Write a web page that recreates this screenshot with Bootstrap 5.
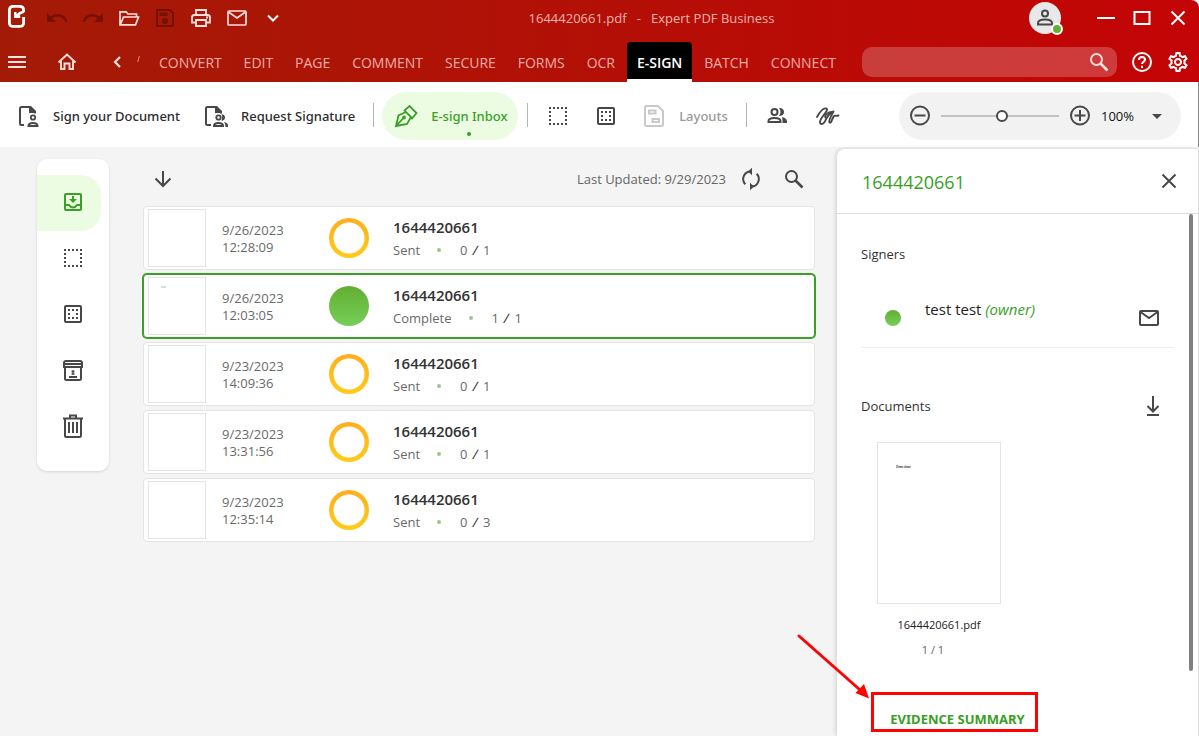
<!DOCTYPE html>
<html lang="en">
<head>
<meta charset="utf-8">
<meta name="viewport" content="width=device-width, initial-scale=1">
<title>1644420661.pdf - Expert PDF Business</title>
<link href="https://cdn.jsdelivr.net/npm/bootstrap@5.3.0/dist/css/bootstrap.min.css" rel="stylesheet">
<style>
  :root { --green: #3a9e27; --mint: #ebfce3; --ink: #484848; --edge: #e4e4e4; }
  body { font-family: "Open Sans", "Noto Sans", sans-serif; font-size: 13px; line-height: 18px; color: #333; background: #f4f4f4; }
  svg { display: block; flex: none; fill: none; }
  :where(svg:not([stroke])) { stroke: currentColor; }
  :where(svg:not([stroke-width])) { stroke-width: 2; }
  .solid { fill: currentColor; stroke: none; }
  button { color: inherit; }
  .tool { width: 36px; height: 36px; padding: 0; border: 0; background: none; display: flex; align-items: center; justify-content: center; flex: none; }
  .tool.slim { width: 34px; }

  .app-head { background: linear-gradient(90deg, #a31b06, #c40406); color: #ffdede; border-top-right-radius: 8px; padding-right: 3px; }
  .app-title { color: #eeb2ae; white-space: pre; padding-right: 17px; }
  .tool:disabled { color: #751003; }
  .avatar { width: 32px; height: 32px; margin-right: 27px; background: #e8e8e8; color: var(--ink); }
  .online { width: 12px; height: 12px; right: -2px; bottom: -1px; background: #62b132; border: 2px solid #fff; }
  .menu-row { height: 40px; margin-top: 6px; }
  .home { margin: 0 14px; }
  .tabs { margin: 0 16px 0 10px; }
  .tabs .nav-link { font-size: 14px; line-height: 18px; color: #f0aca8; padding: 12px 10px 10px; border-radius: 4px 4px 0 0; }
  .tabs .nav-link.active { background: #000; color: #fff; font-weight: 600; padding-bottom: 7px; border-bottom: 3px solid #fff; border-radius: 4px 4px 0 0; }
  .cut-tab { width: 3px; height: 6px; border-right: 1px solid #e48a84; transform: skewX(-15deg); margin-bottom: 6px; }
  .finder { width: 255px; height: 30px; background: rgba(255,255,255,.21); border-radius: 10px; padding-right: 6px; margin-right: 7px; }
  .finder input { background: none; border: 0; outline: 0; color: #fff; min-width: 0; }

  .ribbon { background: #fff; height: 65px; padding: 10px 17px 7px 16px; border-right: 1px solid #888; color: var(--ink); }
  .ribbon .cmd { height: 48px; padding: 0; border: 0; background: none; font-family: "Noto Sans", "Open Sans", sans-serif; font-weight: 500; white-space: nowrap; display: flex; align-items: center; gap: 13px; flex: none; }
  .ribbon .cmd span { color: #2d2d2d; }
  .ribbon .inbox { width: 136px; border-radius: 24px; background: var(--mint); color: var(--green); padding-left: 12px; position: relative; }
  .ribbon .inbox span { color: var(--green); }
  .ribbon .inbox::after { content: ""; position: absolute; left: 85px; bottom: 4px; width: 4px; height: 4px; border-radius: 50%; background: var(--green); }
  .ribbon .cmd:disabled { color: #c9c9c9; }
  .ribbon .cmd:disabled span { color: #999; }
  .cmd-group { display: flex; align-items: center; gap: 24px; }
  .rule { width: 1px; height: 24px; background: #b5b5b5; flex: none; margin: 0 18px 3px; }
  .rule.tight-end { margin-right: 8px; }
  .rule.tight-start { margin-left: 9px; }
  .zoomer { width: 282px; height: 48px; border-radius: 24px; background: #f2f2f2; }
  .zoomer input { appearance: none; width: 118px; height: 14px; background: linear-gradient(#c2c2c2, #c2c2c2) center / 100% 2px no-repeat; margin: 0; }
  .zoomer input::-webkit-slider-thumb { appearance: none; width: 12px; height: 12px; border-radius: 50%; border: 2px solid var(--ink); background: #fff; }
  .zoomer select { appearance: none; border: 0; background: none; color: #111; width: 40px; padding: 0; }

  .side { width: 72px; padding: 16px 0; border-radius: 10px; background: #fff; color: var(--ink); box-shadow: 0 1px 3px rgba(0,0,0,.12); margin: 12px 34px 0 37px; flex: none; }
  .side button { width: 72px; height: 56px; border: 0; background: none; padding: 0 0 2px; display: flex; align-items: center; justify-content: center; }
  .side .current { width: 64px; border-radius: 0 20px 20px 0; background: var(--mint); color: var(--green); padding-left: 8px; }

  .inbox-list { min-width: 0; padding-right: 22px; }
  .list-head { height: 59px; padding: 5px 3px 0 0; color: #666; }
  .list-head svg { stroke: var(--ink); }
  .entry { height: 64px; border: 1px solid var(--edge); border-radius: 4px; background: #fff; padding: 0 4px; color: #6a6a6a; }
  .entry.chosen { border-color: var(--green); box-shadow: 0 0 0 1px var(--green); }
  .page-thumb { width: 58px; height: 58px; border: 1px solid var(--edge); flex: none; position: relative; }
  .scribble { position: absolute; left: 12px; top: 8px; width: 5px; height: 2px; background: #ddd; }
  .when { width: 107px; line-height: 17px; margin-left: 16px; padding-top: 1px; }
  .ring { width: 40px; height: 40px; border-radius: 50%; background: radial-gradient(closest-side, #fff 15px, transparent 16px), linear-gradient(#ffae1c, #ffcb18); flex: none; }
  .ring.full { background: linear-gradient(#62ae33, #76cf57); }
  .entry-name { font-size: 15px; line-height: 22px; font-weight: 600; color: #333; }
  .entry-state { padding: 3px 0 1px; }
  .dot { width: 4px; height: 4px; border-radius: 50%; background: #93cd88; margin: 0 19px 0 17px; }
  .entry b { display: inline-block; font-weight: 400; color: #111; margin: 0 2px; transform: skewX(-12deg); }

  .detail { width: 362px; background: #fff; border-top-left-radius: 8px; border-right: 1px solid #ddd; box-shadow: -1px 0 5px rgba(0,0,0,.16); margin-top: 2px; flex: none; position: relative; color: var(--ink); }
  .detail-head { height: 65px; border-bottom: 1px solid #ddd; padding: 0 17px 0 25px; }
  .detail-head h1 { font-size: 18px; line-height: 24px; font-weight: 400; color: var(--green); margin: 0; padding-top: 1px; }
  .detail h2 { font-size: 13px; line-height: 18px; font-weight: 400; color: #333; margin: 0; }
  .detail-body { padding: 31px 24px 0; }
  .signer { height: 61px; margin-top: 24px; padding: 2px 7px 0 0; border-bottom: 1px solid #efefef; }
  .signer-dot { width: 16px; height: 16px; border-radius: 50%; background: linear-gradient(#62ae33, #76cf57); margin: 0 24px 0 24px; }
  .signer p { font-size: 15px; line-height: 20px; color: #222; margin: 0 0 18px; }
  .signer em { color: var(--green); }
  .docs-head { padding: 40px 3px 0 0; }
  .doc-card { width: 124px; margin: 18px 0 0 16px; text-align: center; font-size: 11px; line-height: 15px; }
  .doc-thumb { height: 162px; border: 1px solid var(--edge); padding: 22px 0 0 18px; text-align: left; font: italic 700 3px/4px "Liberation Serif", serif; color: #333; }
  .doc-name { padding-top: 13px; color: #222; }
  .doc-count { padding: 10px 12px 0 0; color: #666; }
  .scroll-thumb { position: absolute; right: 5px; top: 65px; width: 4px; height: 457px; border-radius: 2px; background: #808080; }
  .evidence { width: 167px; height: 40px; border: 3px solid #ff0303; margin: 35px 0 4px 10px; position: relative; }
  .evidence button { border: 0; background: none; padding: 15px 0 0 6px; width: 100%; font-family: "Noto Sans", "Open Sans", sans-serif; font-weight: 700; color: var(--green); white-space: nowrap; }
  .pointer { position: absolute; left: -78px; top: -62px; color: #ff0303; }
</style>
</head>
<body>
<svg width="0" height="0" class="position-absolute">
  <symbol id="mail" viewBox="0 0 24 24"><rect x="3" y="5" width="18" height="14" rx="1"/><path d="M3.500 6 12 12 20.500 6"/></symbol>
  <symbol id="lens" viewBox="0 0 24 24"><circle cx="9.500" cy="9.500" r="5.500"/><path d="M13.500 13.500 20.500 20.500" stroke-width="2.600"/></symbol>
  <symbol id="dots" viewBox="0 0 24 24"><path d="M3 4h18M3 20h18M4 3v18M20 3v18" stroke-dasharray="2 2"/></symbol>
  <symbol id="boxdots" viewBox="0 0 24 24"><rect x="4" y="4" width="16" height="16" rx="1"/><path d="M7 8h10M7 12h2M11 16h2M7 16h2M15 16h2M15 12h2" stroke-dasharray="2 2"/></symbol>
</svg>
<div class="min-vh-100 d-flex flex-column">
  <header class="app-head">
    <div class="d-flex align-items-center">
      <svg width="39" height="36" viewBox="0 0 39 36" stroke="#fff" stroke-width="2.800" aria-label="Expert PDF"><path d="M23.600 12V10q0-3.600-4-3.600H13.300q-3.900 0-3.900 4v12q0 4 3.900 4h6.400q3.900 0 3.900-4V17"/><path d="M15.300 12v4.800h5M15.500 16.500q4.500-4 8.500-5" stroke-width="2.400"/></svg>
      <button class="tool" disabled aria-label="Undo"><svg class="solid" width="24" height="24" viewBox="0 0 24 24"><path d="M12.500 8c-2.650 0-5.050 1-6.900 2.600L2 7v9h9l-3.600-3.600C8.800 11.200 10.550 10.500 12.500 10.500c3.550 0 6.550 2.300 7.600 5.500l2.400-.8C21.100 11 17.150 8 12.500 8z"/></svg></button>
      <button class="tool" disabled aria-label="Redo"><svg class="solid" width="24" height="24" viewBox="0 0 24 24"><path d="M11.500 8c2.650 0 5.050 1 6.900 2.600L22 7v9h-9l3.600-3.600c-1.400-1.200-3.150-1.900-5.100-1.900-3.550 0-6.550 2.300-7.600 5.500l-2.400-.8C2.900 11 6.850 8 11.500 8z"/></svg></button>
      <button class="tool" aria-label="Open"><svg width="24" height="24" viewBox="0 0 24 24" stroke-width="1.700"><path d="M3 18.800V5.800h6l2 2.200h8.500v2.500M3.200 18.800 6.500 11H21.500l-3 7.800z"/></svg></button>
      <button class="tool" disabled aria-label="Save"><svg width="24" height="24" viewBox="0 0 24 24"><path d="M4 4h13l3 3v13H4z"/><path class="solid" d="M6.500 6.500h8v3.500h-8z"/><circle class="solid" cx="12" cy="15" r="3"/></svg></button>
      <button class="tool" aria-label="Print"><svg width="24" height="24" viewBox="0 0 24 24" stroke-width="1.800"><path d="M7 8.500V4h10v4.500M7 16.500H3v-5q0-2.500 2.500-2.500h13q2.500 0 2.500 2.500v5h-4M7 14h10v6H7z"/><path d="M17 11.500h2"/></svg></button>
      <button class="tool" aria-label="Mail"><svg width="26" height="24" viewBox="0 0 24 24" stroke-width="1.700"><use href="#mail"/></svg></button>
      <button class="tool" aria-label="More"><svg width="24" height="24" viewBox="0 0 24 24" stroke="#fff"><path d="M7 9.500l5 5 5-5"/></svg></button>
      <div class="app-title flex-fill text-center">1644420661.pdf   -   Expert PDF Business</div>
      <div class="avatar rounded-circle position-relative flex-shrink-0"><svg class="mx-auto pt-1" width="24" height="28" viewBox="0 0 24 24"><circle cx="12" cy="7.500" r="3"/><path d="M5 18.500v-1.500q0-3.500 7-3.500t7 3.500v1.500z"/></svg><span class="online rounded-circle position-absolute"></span></div>
      <div class="d-flex text-white">
        <button class="tool" aria-label="Minimize"><svg width="24" height="24" viewBox="0 0 24 24"><path d="M3 12h18"/></svg></button>
        <button class="tool" aria-label="Maximize"><svg width="24" height="24" viewBox="0 0 24 24"><rect x="4.500" y="6" width="15" height="12"/></svg></button>
        <button class="tool" aria-label="Close"><svg width="24" height="24" viewBox="0 0 24 24"><path d="M5.500 5.500l13 13M18.500 5.500l-13 13"/></svg></button>
      </div>
    </div>
    <div class="menu-row d-flex align-items-center">
      <button class="tool" aria-label="Menu"><svg width="24" height="24" viewBox="0 0 24 24"><path d="M2 7h18M2 12h18M2 17h18"/></svg></button>
      <button class="tool home" aria-label="Home"><svg width="24" height="24" viewBox="0 0 24 24" stroke-width="1.900"><path d="M2.500 12.500 11 4.500l8.500 8M5 11v8h3.500v-5.500h5V19H17v-8"/></svg></button>
      <button class="tool" aria-label="Scroll tabs left"><svg width="24" height="24" viewBox="0 0 24 24" stroke-width="2.200"><path d="M14 7l-5 5 5 5"/></svg></button>
      <span class="cut-tab"></span>
      <nav class="tabs nav flex-nowrap flex-fill justify-content-between" aria-label="Ribbon tabs">
        <a class="nav-link" href="#">CONVERT</a><a class="nav-link" href="#">EDIT</a><a class="nav-link" href="#">PAGE</a><a class="nav-link" href="#">COMMENT</a><a class="nav-link" href="#">SECURE</a><a class="nav-link" href="#">FORMS</a><a class="nav-link" href="#">OCR</a><a class="nav-link active" href="#" aria-current="page">E-SIGN</a><a class="nav-link" href="#">BATCH</a><a class="nav-link" href="#">CONNECT</a>
      </nav>
      <label class="finder d-flex align-items-center"><input type="text" class="flex-fill ps-3" aria-label="Search commands"><svg width="24" height="24"><use href="#lens"/></svg></label>
      <button class="tool text-white" aria-label="Help"><svg width="24" height="24" viewBox="0 0 24 24"><circle cx="12" cy="12" r="9"/><path d="M9 10q0-3 3-3t3 2.700c0 2.100-3 2.200-3 4.300M12 15.800v2.200"/></svg></button>
      <button class="tool text-white" aria-label="Settings"><svg class="solid" width="24" height="24" viewBox="0 0 24 24"><path d="M19.430 12.980c.04-.32.07-.64.07-.98s-.03-.66-.07-.98l2.110-1.650c.19-.15.24-.42.12-.64l-2-3.460c-.12-.22-.39-.3-.61-.22l-2.490 1c-.52-.4-1.080-.73-1.690-.98l-.38-2.650C14.460 2.180 14.250 2 14 2h-4c-.25 0-.46.18-.49.42l-.38 2.650c-.61.25-1.170.59-1.690.98l-2.490-1c-.23-.09-.49 0-.61.22l-2 3.460c-.13.22-.07.49.12.64l2.110 1.650c-.04.32-.07.65-.07.98s.03.66.07.98l-2.110 1.650c-.19.15-.24.42-.12.64l2 3.460c.12.22.39.3.61.22l2.490-1c.52.4 1.080.73 1.690.98l.38 2.650c.03.24.24.42.49.42h4c.25 0 .46-.18.49-.42l.38-2.650c.61-.25 1.170-.59 1.690-.98l2.490 1c.23.09.49 0 .61-.22l2-3.460c.12-.22.07-.49-.12-.64l-2.110-1.650zm-1.980-1.710c.04.31.05.52.05.73s-.02.43-.05.73l-.14 1.130.89.700 1.080.84-.7 1.210-1.270-.51-1.040-.42-.9.680c-.43.32-.84.56-1.250.73l-1.060.43-.16 1.130-.2 1.350h-1.400l-.19-1.350-.16-1.130-1.060-.43c-.43-.18-.83-.41-1.230-.71l-.91-.7-1.060.43-1.270.51-.7-1.210 1.080-.84.89-.7-.14-1.130c-.03-.31-.05-.54-.05-.74s.02-.43.05-.73l.14-1.130-.89-.7-1.080-.84.7-1.210 1.270.51 1.040.42.9-.68c.43-.32.84-.56 1.250-.73l1.060-.43.16-1.130.2-1.350h1.390l.19 1.350.16 1.130 1.060.43c.43.18.83.41 1.230.71l.91.7 1.060-.43 1.270-.51.7 1.210-1.070.85-.89.7.14 1.130zM12 8c-2.210 0-4 1.790-4 4s1.790 4 4 4 4-1.790 4-4-1.790-4-4-4zm0 6c-1.100 0-2-.9-2-2s.9-2 2-2 2 .9 2 2-.9 2-2 2z"/></svg></button>
    </div>
  </header>

  <div class="ribbon d-flex align-items-center">
    <div class="cmd-group">
      <button class="cmd"><svg width="24" height="24" viewBox="0 0 24 24"><path d="M8 21H5.500Q4 21 4 19.500v-15Q4 3 5.500 3H14"/><path class="solid" d="M13 2h2l5 5v2.500h-2V9h-5z"/><circle cx="17" cy="13.500" r="2.200" stroke-width="1.800"/><path d="M12.500 22q0-3 4.500-3t4.500 3z"/></svg><span>Sign your Document</span></button>
      <button class="cmd"><svg width="24" height="24" viewBox="0 0 24 24"><path d="M7 21H3.500Q2 21 2 19.500v-15Q2 3 3.500 3H12"/><path class="solid" d="M11 2h2l5 5v2.500h-2V9h-5z"/><circle cx="14.500" cy="13.500" r="2.200" stroke-width="1.800"/><path d="M10 22q0-3 4.500-3t4.500 3z"/><path class="solid" d="M17.500 10.300q3.500.2 3.500 3.200t-3.500 3.200q1.800-3.200 0-6.400zM20 18q4 .8 4 3.500V23h-2.500q.3-3-1.500-5z"/></svg><span>Request Signature</span></button>
    </div>
    <span class="rule tight-end"></span>
    <button class="cmd inbox"><svg width="24" height="24" viewBox="0 0 24 24" stroke-width="1.800"><path d="M2 22 4.500 11.500 12 8l5 5-4 7zM12 8 10.500 6.500 15.500 2l7 7-4.500 5.500L17 13M2 22l7-7.500"/><circle cx="10" cy="13.500" r="1"/></svg><span>E-sign Inbox</span></button>
    <span class="rule tight-start"></span>
    <div class="cmd-group">
      <button class="cmd" aria-label="Field"><svg width="24" height="24"><use href="#dots"/></svg></button>
      <button class="cmd" aria-label="Field area"><svg width="24" height="24"><use href="#boxdots"/></svg></button>
      <button class="cmd" disabled><svg width="24" height="24" viewBox="0 0 24 24"><path d="M4.500 2H16l5 5v13.500q0 1.500-1.500 1.500h-15Q3 22 3 20.500v-17Q3 2 4.500 2zM7 6.500h6.500v3H7zM10.500 15H17v3h-6.500z"/></svg><span>Layouts</span></button>
    </div>
    <span class="rule"></span>
    <div class="cmd-group">
      <button class="cmd" aria-label="Contacts"><svg width="24" height="24" viewBox="0 0 24 24"><circle cx="9.500" cy="8" r="3"/><path d="M3.500 18v-1q0-3 6-3t6 3v1z"/><path class="solid" d="M14 4q5 0 5 4t-5 4q3-4 0-8zM17 13q5 1 5 4.500V19h-4.500v-1.500q0-2.500-.5-4.500z"/></svg></button>
      <button class="cmd" aria-label="Signatures"><svg width="28" height="24" viewBox="0 0 28 24" stroke-width="1.900" stroke-linecap="round" stroke-linejoin="round"><path d="M4 13C6.500 8.500 10.500 3.500 13.500 4.500c3 1.500-6.500 9-6.500 13.500 0 3 3 2.500 4.500 0C14 13.500 15 9.500 20.500 7.500c-1.500 3-5.500 9.500-4 11 2 1.500 2.500-4.500 4.500-6.500 1.500-1 1 .5 4.500-.5"/><path d="M19.500 8C14 8 11 12 12.500 13.500"/></svg></button>
    </div>
    <div class="zoomer d-flex align-items-center flex-shrink-0 ms-auto">
      <button class="tool slim ms-1" aria-label="Zoom out"><svg width="24" height="24" viewBox="0 0 24 24"><circle cx="12" cy="11.500" r="9"/><path d="M6.500 11.500h11"/></svg></button>
      <input type="range" class="ms-1" min="0" max="100" value="52" aria-label="Zoom">
      <button class="tool slim ms-1" aria-label="Zoom in"><svg width="24" height="24" viewBox="0 0 24 24"><circle cx="12" cy="11.500" r="9"/><path d="M6.500 11.500h11M12 6v11"/></svg></button>
      <select class="ms-1" aria-label="Zoom level"><option>100%</option></select>
      <svg class="solid ms-1" width="24" height="24" viewBox="0 0 24 24"><path d="M7 10h10l-5 5z"/></svg>
    </div>
  </div>

  <main class="d-flex flex-fill">
    <nav class="side align-self-start" aria-label="Folders">
      <button class="current" aria-label="Inbox"><svg width="24" height="24" viewBox="0 0 24 24"><rect x="4" y="4" width="16" height="16" rx="1"/><path d="M4 15h4q1.500 2.500 4 2.500T16 15h4"/><path class="solid" d="M11 6h2v3h3l-4 4-4-4h3z"/></svg></button>
      <button aria-label="Drafts"><svg width="24" height="24"><use href="#dots"/></svg></button>
      <button aria-label="Templates"><svg width="24" height="24"><use href="#boxdots"/></svg></button>
      <button aria-label="Archive"><svg width="24" height="24" viewBox="0 0 24 24"><path d="M3 9V5q0-2 2-2h14q2 0 2 2v4zM3 6h18M4 9v11.500q0 1.500 1.500 1.500h13q1.500 0 1.500-1.500V9M8 19h8"/><path d="M12 12v4.500M10.500 13.500h3M10.500 16h3" stroke-width="1.300"/></svg></button>
      <button aria-label="Trash"><svg width="24" height="26" viewBox="0 0 24 26"><path d="M2 5.500h20M9 5V2.500h6V5M4 5.500v17q0 1.500 1.500 1.500h13q1.500 0 1.500-1.500v-17M8 9v11M12 9v11M16 9v11"/></svg></button>
    </nav>

    <section class="inbox-list flex-fill">
      <div class="list-head d-flex align-items-center">
        <button class="tool me-auto" aria-label="Sort"><svg width="24" height="24" viewBox="0 0 24 24"><path d="M14 4v15M6.500 11.500l7.500 7.500 7.500-7.500"/></svg></button>
        <span class="pe-2">Last Updated: 9/29/2023</span>
        <button class="tool slim" aria-label="Refresh"><svg width="24" height="24" viewBox="0 0 24 24"><path d="M6.300 17.200A7.500 7.500 0 0 1 12 4.500M17.700 6.800A7.500 7.500 0 0 1 12 19.500"/><path fill="#484848" stroke="none" d="M13 .8v7.400L9 4.500zM11 23.200v-7.400l4 3.700z"/></svg></button>
        <button class="tool ms-2" aria-label="Search list"><svg width="24" height="24" viewBox="0 0 24 24"><use href="#lens"/></svg></button>
      </div>
      <div class="d-flex flex-column gap-1">
        <article class="entry d-flex align-items-center"><div class="page-thumb"></div><div class="when">9/26/2023<br>12:28:09</div><div class="ring"></div><div class="ms-4"><div class="entry-name">1644420661</div><div class="entry-state d-flex align-items-center">Sent<i class="dot"></i><span>0 <b>/</b> 1</span></div></div></article>
        <article class="entry chosen d-flex align-items-center"><div class="page-thumb"><i class="scribble"></i></div><div class="when">9/26/2023<br>12:03:05</div><div class="ring full"></div><div class="ms-4"><div class="entry-name">1644420661</div><div class="entry-state d-flex align-items-center">Complete<i class="dot"></i><span>1 <b>/</b> 1</span></div></div></article>
        <article class="entry d-flex align-items-center"><div class="page-thumb"></div><div class="when">9/23/2023<br>14:09:36</div><div class="ring"></div><div class="ms-4"><div class="entry-name">1644420661</div><div class="entry-state d-flex align-items-center">Sent<i class="dot"></i><span>0 <b>/</b> 1</span></div></div></article>
        <article class="entry d-flex align-items-center"><div class="page-thumb"></div><div class="when">9/23/2023<br>13:31:56</div><div class="ring"></div><div class="ms-4"><div class="entry-name">1644420661</div><div class="entry-state d-flex align-items-center">Sent<i class="dot"></i><span>0 <b>/</b> 1</span></div></div></article>
        <article class="entry d-flex align-items-center"><div class="page-thumb"></div><div class="when">9/23/2023<br>12:35:14</div><div class="ring"></div><div class="ms-4"><div class="entry-name">1644420661</div><div class="entry-state d-flex align-items-center">Sent<i class="dot"></i><span>0 <b>/</b> 3</span></div></div></article>
      </div>
    </section>

    <aside class="detail">
      <div class="detail-head d-flex align-items-center justify-content-between">
        <h1>1644420661</h1>
        <button class="tool w-auto" aria-label="Close details"><svg width="24" height="24" viewBox="0 0 24 24"><path d="M5.500 5.500l13 13M18.500 5.500l-13 13"/></svg></button>
      </div>
      <div class="scroll-thumb"></div>
      <div class="detail-body">
        <h2>Signers</h2>
        <div class="signer d-flex align-items-center">
          <i class="signer-dot"></i>
          <p class="flex-fill">test test <em>(owner)</em></p>
          <button class="tool" aria-label="Email signer"><svg width="26" height="24" viewBox="0 0 24 24"><use href="#mail"/></svg></button>
        </div>
        <div class="docs-head d-flex align-items-center justify-content-between">
          <h2>Documents</h2>
          <button class="tool" aria-label="Download"><svg width="24" height="24" viewBox="0 0 24 24"><path d="M12 2v15M6.500 12l5.500 5.500 5.500-5.500M6 21h12"/></svg></button>
        </div>
        <div class="doc-card">
          <div class="doc-thumb">Demo demo</div>
          <div class="doc-name">1644420661.pdf</div>
          <div class="doc-count">1 / 1</div>
        </div>
        <div class="evidence">
          <button>EVIDENCE SUMMARY</button>
          <svg class="pointer" width="80" height="70" viewBox="0 0 80 70"><path d="M3 3l60 53" stroke-width="3" stroke-linecap="round"/><path class="solid" d="M73 65.500 59.500 60l8.500-9z"/></svg>
        </div>
      </div>
    </aside>
  </main>
</div>
<script src="https://cdn.jsdelivr.net/npm/bootstrap@5.3.0/dist/js/bootstrap.bundle.min.js"></script>
</body>
</html>
